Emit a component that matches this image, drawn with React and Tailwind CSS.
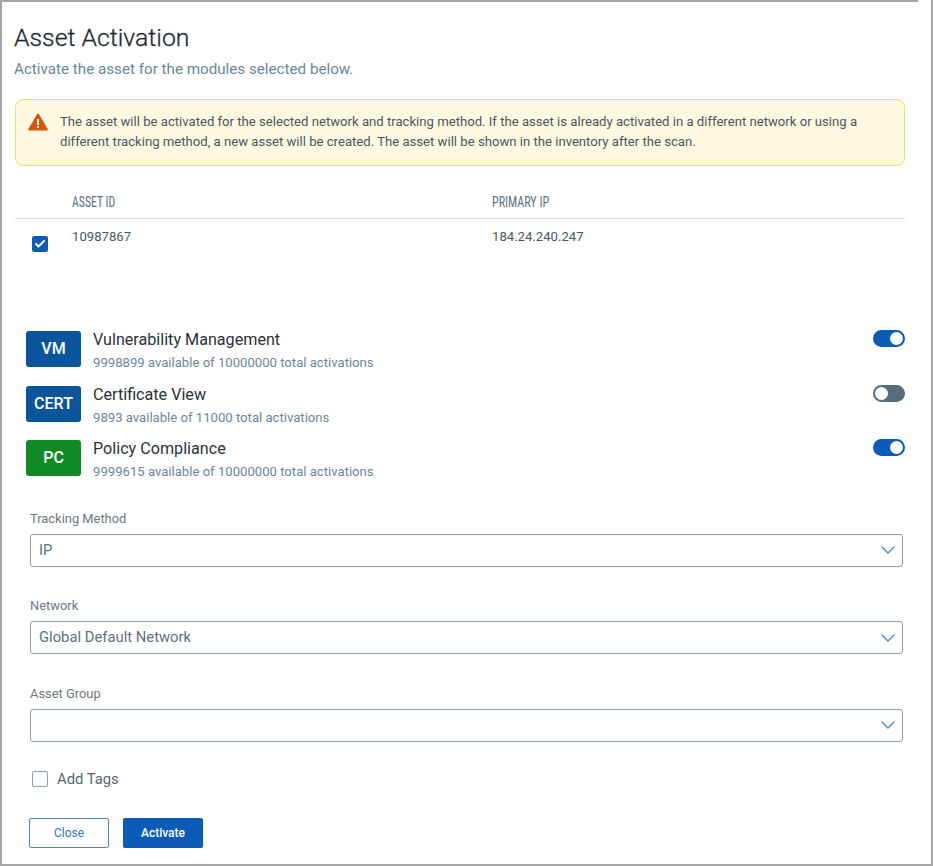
import React from 'react';
import { Check } from 'lucide-react';

const modules = [
  { code: 'VM', name: 'Vulnerability Management', info: '9998899 available of 10000000 total activations', color: 'bg-[#0b559c]', on: true },
  { code: 'CERT', name: 'Certificate View', info: '9893 available of 11000 total activations', color: 'bg-[#0b559c]', on: false },
  { code: 'PC', name: 'Policy Compliance', info: '9999615 available of 10000000 total activations', color: 'bg-[#0f8a26]', on: true },
];

const fields = [
  { label: 'Tracking Method', value: 'IP' },
  { label: 'Network', value: 'Global Default Network' },
  { label: 'Asset Group', value: '' },
];

const Toggle = ({ on }) => (
  <div className={`w-[32.5px] h-[17px] -mt-[1px] rounded-full border-2 flex items-center ${on ? 'bg-[#0a5cb8] border-[#0a5cb8] justify-end' : 'bg-[#546e7a] border-[#546e7a] justify-start'}`}>
    <div className="w-[13px] h-[13px] rounded-full bg-white" />
  </div>
);

const App = () => {
  return (
    <div className="w-[933px] h-[866px] bg-white border-x-2 border-b-2 border-[#a6a6a6] overflow-hidden text-[#2b3238] font-['Roboto',sans-serif]">
      <div className="w-[916px] h-[2px] bg-[#a6a6a6]" />
      <div className="pl-[13px] pr-[26px]">
        <h1 className="mt-[20px] -ml-[1px] text-[24.8px] leading-[32px] text-[#1f2a33] font-light [-webkit-text-stroke:0.3px_#1f2a33]">Asset Activation</h1>
        <p className="mt-[5px] -ml-[1px] text-[15.2px] leading-[20px] text-[#6b8799]">Activate the asset for the modules selected below.</p>

        {/* warning */}
        <div className="mt-[20px] h-[67px] flex bg-[#fdf9e1] border border-[#f3da6b] rounded-lg pl-[12px] pt-[12px]">
          <svg width="20" height="18" viewBox="0 0 20 18" className="shrink-0 mt-[1px]">
            <path d="M10 1.5 L18.8 16.6 H1.2 Z" fill="#d4570f" stroke="#d4570f" strokeWidth="2" strokeLinejoin="round" />
            <rect x="9" y="6" width="2" height="6" fill="#fff" />
            <rect x="9" y="13" width="2" height="2" fill="#fff" />
          </svg>
          <p className="ml-[12px] text-[13.13px] leading-[20px] text-[#4d5760] w-[815px]">
            The asset will be activated for the selected network and tracking method. If the asset is already activated in a different network or using a different tracking method, a new asset will be created. The asset will be shown in the inventory after the scan.
          </p>
        </div>

        {/* table */}
        <div className="mt-[26px] h-[27px] flex items-start border-b border-[#d8dcdf] text-[14px] leading-[20px] text-[#5c7382] [font-stretch:75%]">
          <div className="ml-[57px] w-[420px] origin-left scale-x-[0.84]">ASSET ID</div>
          <div className="origin-left scale-x-[0.86]">PRIMARY IP</div>
        </div>
        <div className="flex h-[112px] text-[13.13px] text-[#4d5760]">
          <div className="w-[57px] pl-[17px] pt-[17px]">
            <div className="w-[16px] h-[16px] rounded-[2px] bg-[#0a5cb8] flex items-center justify-center">
              <Check size={12} strokeWidth={4} className="text-white" />
            </div>
          </div>
          <div className="w-[420px] pt-[8px] leading-[20px]">10987867</div>
          <div className="pt-[8px] leading-[20px]">184.24.240.247</div>
        </div>

        {/* modules */}
        <div className="pl-[11px]">
          {modules.map((m) => (
            <div key={m.code} className="flex items-start h-[54.5px]">
              <div className={`w-[55px] h-[36px] rounded-[3px] ${m.color} text-white font-medium text-[16px] flex items-center justify-center`}>{m.code}</div>
              <div className="ml-[12px] flex-1">
                <div className="text-[16.15px] leading-[20px] text-[#2b3238] -mt-[1px]">{m.name}</div>
                <div className="text-[13.14px] leading-[18px] mt-[4px] text-[#6b8799]">{m.info}</div>
              </div>
              <Toggle on={m.on} />
            </div>
          ))}
        </div>

        {/* selects */}
        <div className="pl-[15px] mt-[15px] pr-[2px]">
          {fields.map((f) => (
            <div key={f.label} className="h-[87.5px]">
              <label className="block text-[12.9px] leading-[18px] text-[#6b7a85]">{f.label}</label>
              <div className="mt-[6px] h-[33px] border border-[#8da0ae] rounded-[3px] flex items-center justify-between pl-[8px] pr-[6px] text-[14.8px] text-[#5c7382]">
                <span>{f.value}</span>
                <svg width="16" height="10" viewBox="0 0 16 10" fill="none" className="shrink-0">
                  <path d="M1.5 1.5 L8 8 L14.5 1.5" stroke="#4a8ad0" strokeWidth="1.4" />
                </svg>
              </div>
            </div>
          ))}
        </div>

        <div className="pl-[17px] flex items-center -mt-[3px]">
          <div className="w-[16px] h-[16px] rounded-[2px] border border-[#8da0ae]" />
          <span className="ml-[9px] text-[14.8px] leading-[20px] text-[#5a6670]">Add Tags</span>
        </div>

        <div className="pl-[14px] mt-[29px] flex gap-[14px]">
          <button className="w-[80px] h-[30px] bg-white border border-[#4a8ad0] rounded-[2px] text-[12px] text-[#2f78c9]">Close</button>
          <button className="w-[80px] h-[30px] bg-[#0a5cb8] rounded-[2px] text-[12px] font-medium text-white">Activate</button>
        </div>
      </div>
    </div>
  );
};

export default App;
